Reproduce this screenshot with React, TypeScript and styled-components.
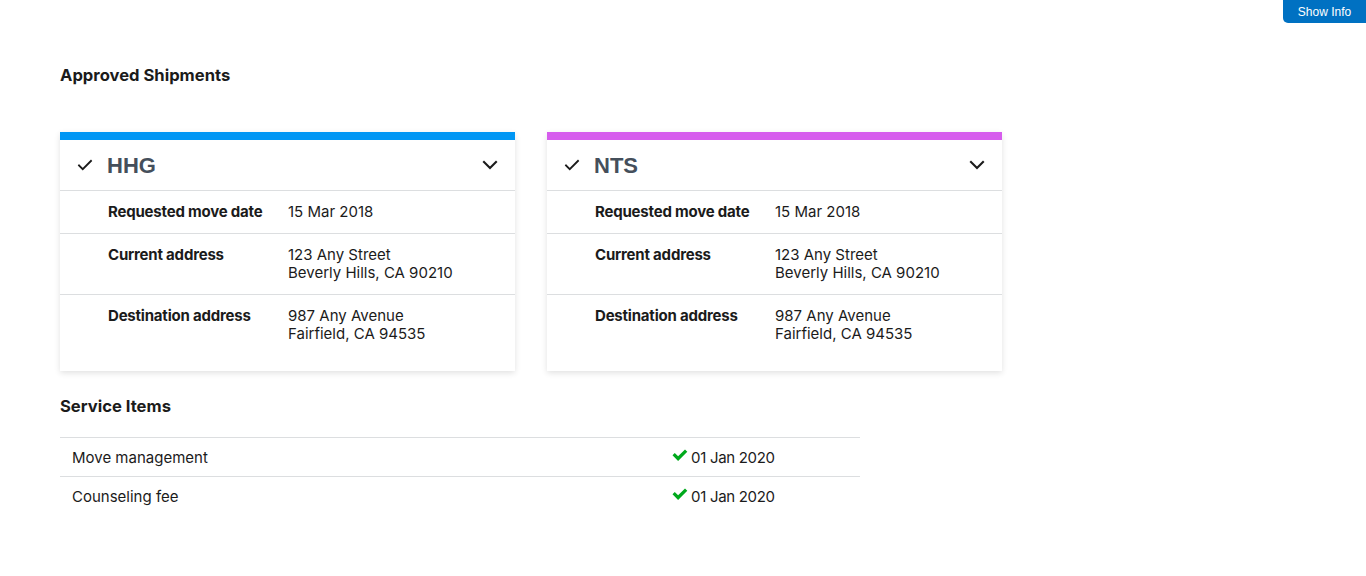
import React from "react";
import styled, { createGlobalStyle } from "styled-components";

const GlobalStyle = createGlobalStyle`
  body {
    margin: 0;
    background: #ffffff;
    font-family: Inter, "Noto Sans", sans-serif;
    color: #1b1b1b;
  }
`;

const Page = styled.div`
  padding: 62px 60px 40px;
`;

const InfoButton = styled.button`
  position: absolute;
  top: 0;
  right: 0;
  width: 83px;
  height: 23px;
  border: none;
  border-radius: 0 0 0 5px;
  background: #0071c2;
  color: #ffffff;
  font-family: "Liberation Sans", Arial, sans-serif;
  font-size: 12px;
  padding: 0;
`;

const SectionTitle = styled.h2`
  margin: 0;
  font-size: 16.6px;
  line-height: 26px;
  font-weight: 700;
  color: #1b1b1b;
`;

const CardGrid = styled.div`
  display: flex;
  gap: 32px;
  margin-top: 44px;
`;

const Card = styled.section<{ $accent: string }>`
  width: 455px;
  border-top: 8px solid ${(p) => p.$accent};
  background: #ffffff;
  box-shadow: 0 2px 6px rgba(0, 0, 0, 0.12);
  padding-bottom: 16px;
`;

const CardHeader = styled.div`
  display: flex;
  align-items: center;
  height: 50px;
  padding: 0 16px 0 16px;
  border-bottom: 1px solid #dcdee0;
`;

const Title = styled.h3`
  margin: 0 0 0 13px;
  flex: 1;
  font-family: "Liberation Sans", Arial, sans-serif;
  font-size: 22px;
  font-weight: 700;
  color: #454f5b;
  line-height: 50px;
  padding-top: 2px;
`;

const Row = styled.div<{ $last?: boolean }>`
  display: flex;
  padding: 12px 0 12px 48px;
  border-bottom: ${(p) => (p.$last ? "none" : "1px solid #dcdee0")};
  font-size: 15px;
  line-height: 18px;
`;

const Label = styled.div`
  width: 180px;
  font-weight: 700;
  letter-spacing: -0.2px;
`;

const Value = styled.div`
  font-weight: 400;
`;

const ServiceTitle = styled(SectionTitle)`
  margin-top: 22px;
`;

const Table = styled.div`
  width: 800px;
  margin-top: 18px;
  border-top: 1px solid #dcdee0;
`;

const TableRow = styled.div<{ $last?: boolean }>`
  display: flex;
  align-items: center;
  height: 38px;
  padding: 0 12px;
  border-bottom: ${(p) => (p.$last ? "none" : "1px solid #dcdee0")};
  font-size: 15px;
`;

const ItemName = styled.div`
  width: 600px;
`;

const ItemDate = styled.div`
  display: flex;
  align-items: center;
  gap: 3px;
  letter-spacing: -0.3px;
  svg {
    margin-top: -4px;
  }
`;

const Check = ({ size = 18 }: { size?: number }) => (
  <svg width={size} height={size} viewBox="0 0 24 24" fill="none" stroke="#1b1b1b" strokeWidth="2.4" strokeLinecap="square">
    <path d="M4 12.5l5 5L20 6.5" />
  </svg>
);

const Chevron = () => (
  <svg width="18" height="18" viewBox="0 0 24 24" fill="none" stroke="#1b1b1b" strokeWidth="2.8" strokeLinecap="square">
    <path d="M4 8l8 8 8-8" />
  </svg>
);

const GreenCheck = () => (
  <svg width="16" height="14" viewBox="0 0 16 14">
    <path d="M0.5 7.3l2.3-2.3 3.3 3.3L13 1.4l2.3 2.3-9.2 9.2z" fill="#00a91c" />
  </svg>
);

type Shipment = { name: string; color: string };

const shipments: Shipment[] = [
  { name: "HHG", color: "#0096f4" },
  { name: "NTS", color: "#d65ced" },
];

const ShipmentCard = ({ s }: { s: Shipment }) => (
  <Card $accent={s.color}>
    <CardHeader>
      <Check />
      <Title>{s.name}</Title>
      <Chevron />
    </CardHeader>
    <Row>
      <Label>Requested move date</Label>
      <Value>15 Mar 2018</Value>
    </Row>
    <Row>
      <Label>Current address</Label>
      <Value>
        123 Any Street
        <br />
        Beverly Hills, CA 90210
      </Value>
    </Row>
    <Row $last>
      <Label>Destination address</Label>
      <Value>
        987 Any Avenue
        <br />
        Fairfield, CA 94535
      </Value>
    </Row>
  </Card>
);

export default function App() {
  return (
    <>
      <GlobalStyle />
      <InfoButton>Show Info</InfoButton>
      <Page>
        <SectionTitle>Approved Shipments</SectionTitle>
        <CardGrid>
          {shipments.map((s) => (
            <ShipmentCard key={s.name} s={s} />
          ))}
        </CardGrid>
        <ServiceTitle>Service Items</ServiceTitle>
        <Table>
          <TableRow>
            <ItemName>Move management</ItemName>
            <ItemDate>
              <GreenCheck />
              01 Jan 2020
            </ItemDate>
          </TableRow>
          <TableRow $last>
            <ItemName>Counseling fee</ItemName>
            <ItemDate>
              <GreenCheck />
              01 Jan 2020
            </ItemDate>
          </TableRow>
        </Table>
      </Page>
    </>
  );
}
